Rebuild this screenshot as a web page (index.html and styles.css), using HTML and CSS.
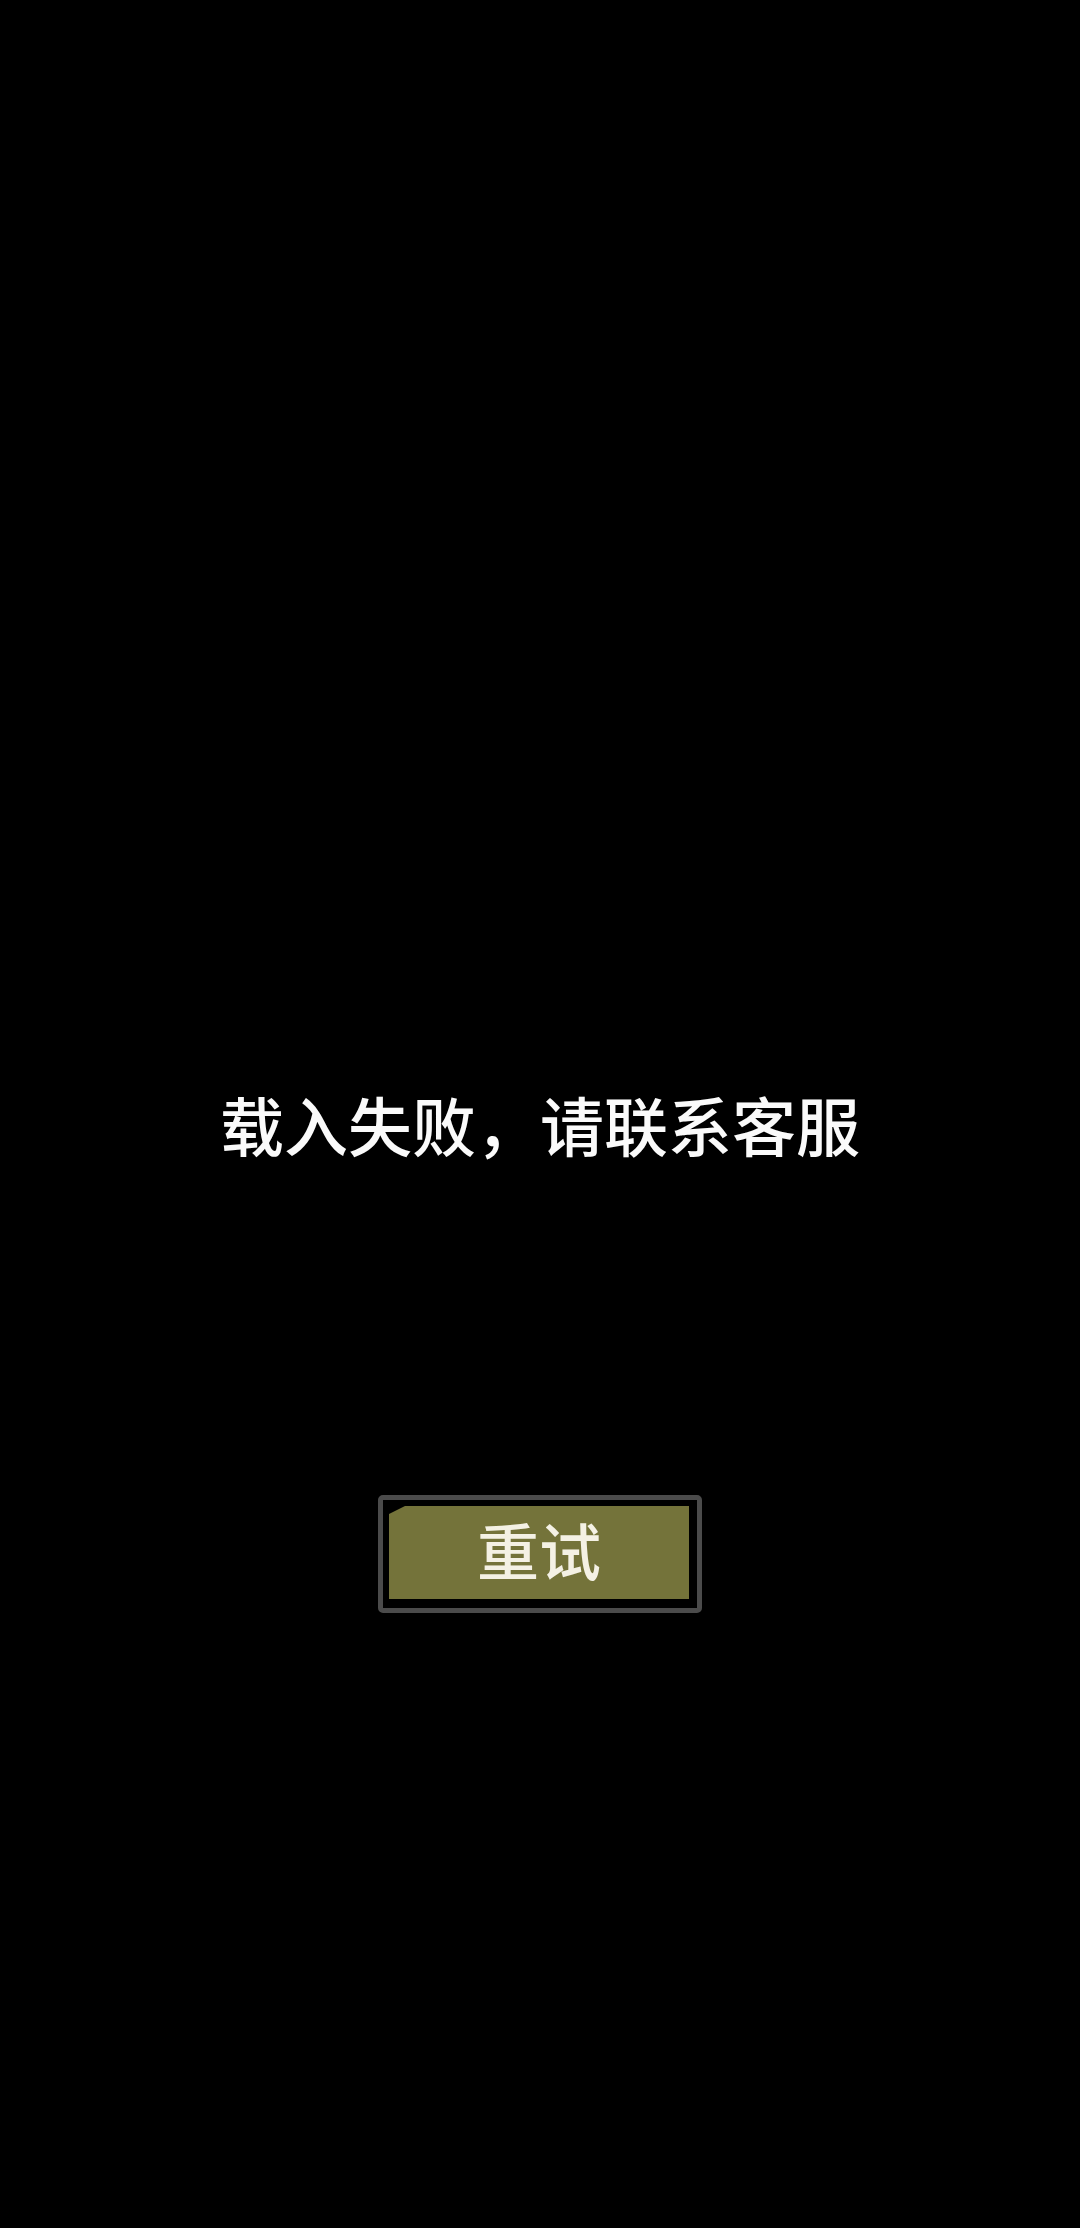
FILE: index.html
```html
<!DOCTYPE html>
<html lang="zh-CN">
<head>
<meta charset="utf-8">
<title>载入失败</title>
<link rel="stylesheet" href="styles.css">
</head>
<body>
<main class="screen">
  <p class="message">载入失败，请联系客服</p>
  <button class="retry" type="button"><span class="retry-face">重试</span></button>
</main>
</body>
</html>
```
FILE: styles.css
```css
html, body {
  margin: 0;
  padding: 0;
  background: #000;
}
.screen {
  width: 1080px;
  height: 2228px;
  display: flex;
  flex-direction: column;
  align-items: center;
  font-family: "Noto Sans CJK SC", "Noto Sans", sans-serif;
}
.message {
  margin: 1091px 0 0;
  font-size: 64px;
  font-weight: 500;
  line-height: 64px;
  color: #fafafa;
  white-space: nowrap;
}
.retry {
  margin-top: 340px;
  width: 324px;
  height: 118px;
  box-sizing: border-box;
  border: 5px solid #4b4b4b;
  border-radius: 5px;
  background: #000;
  padding: 6px 8px 9px 6px;
  display: flex;
  cursor: pointer;
}
.retry-face {
  flex: 1;
  display: flex;
  align-items: center;
  justify-content: center;
  padding-bottom: 8px;
  background: #74733a;
  clip-path: polygon(0 8px, 16px 0, 100% 0, 100% 100%, 0 100%);
  color: #f4f1e4;
  font-family: "Noto Sans CJK SC", "Noto Sans", sans-serif;
  font-size: 62px;
  font-weight: 500;
  line-height: 1;
}
```
